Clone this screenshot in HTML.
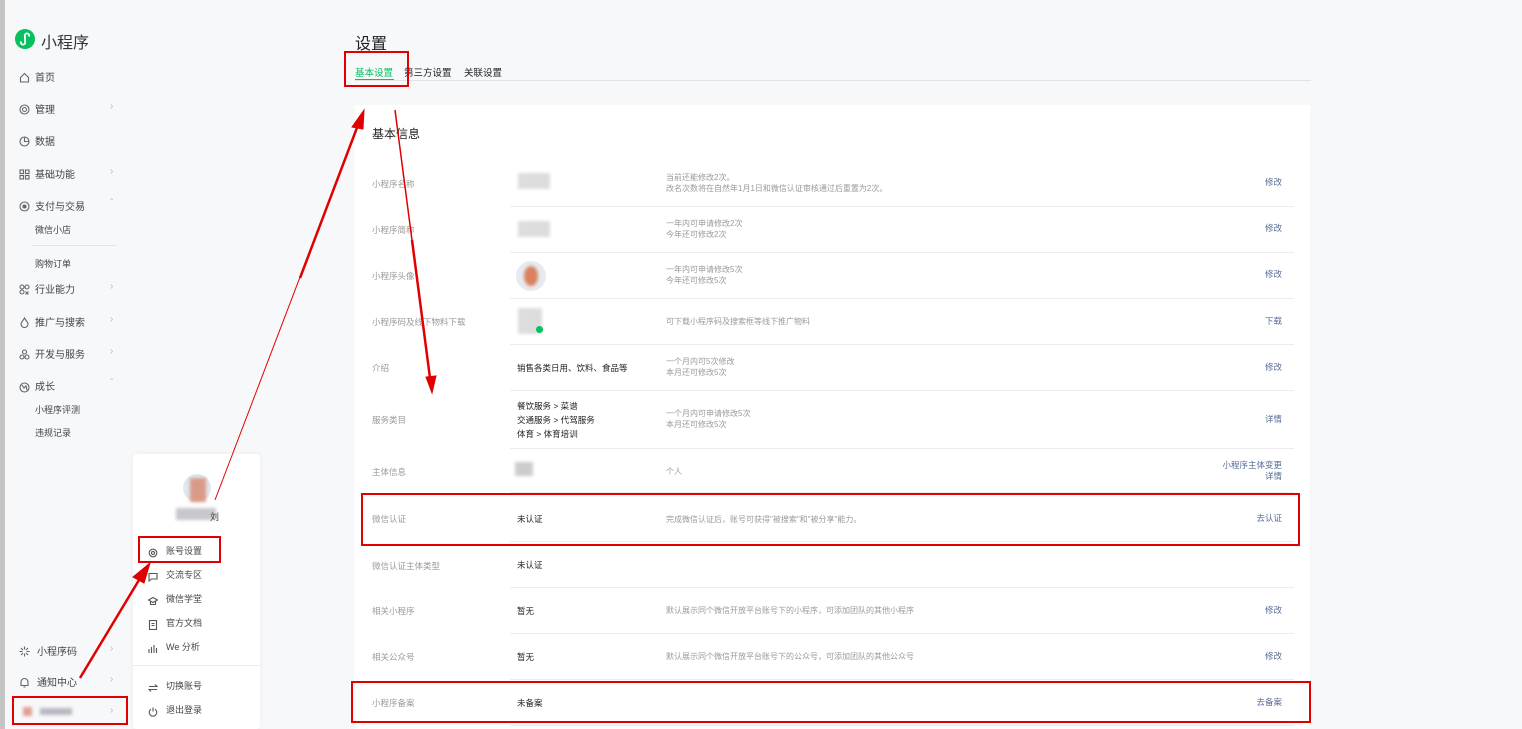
<!DOCTYPE html>
<html><head><meta charset="utf-8"><style>
*{margin:0;padding:0;box-sizing:border-box}
body{width:1522px;height:729px;overflow:hidden;background:#f7f8fa;font-family:"Liberation Sans","Noto Sans CJK SC",sans-serif;position:relative;color:#353535}
.a{position:absolute;white-space:nowrap}
.nav{font-size:10px;color:#444}
.ic{position:absolute;left:19px;width:11px;height:11px}
.ic svg{width:11px;height:11px;fill:none;stroke:#666;stroke-width:1.1}
.chev{position:absolute;left:110px;font-size:10px;color:#bbb}
.sub{font-size:9px;color:#444}
.lab{font-size:8.5px;color:#9a9a9a}
.val{font-size:8.5px;color:#222}
.desc{font-size:8px;color:#9a9a9a;line-height:11px}
.act{font-size:8.5px;color:#576b95;text-align:right;line-height:11px}
.hr{position:absolute;left:510px;width:784px;height:1px;background:#ececec}
.blur{position:absolute;background:#ddd;filter:blur(1.5px)}
.rb{position:absolute;border:2px solid #e00000}
.mi{font-size:9px;color:#444}
.pi{position:absolute;left:148px;width:10px;height:10px}
.pi svg{width:10px;height:10px;fill:none;stroke:#555;stroke-width:1.1}
</style></head><body>
<div class="a" style="left:0;top:0;width:5px;height:729px;background:#c4c4c4"></div>
<svg class="a" style="left:15px;top:29px" width="20" height="20" viewBox="0 0 20 20"><circle cx="10" cy="10" r="10" fill="#07c160"/><path d="M6 12.5a2.2 2.2 0 1 0 4 0V7.5a2.2 2.2 0 1 1 4 0" stroke="#fff" stroke-width="1.8" fill="none"/></svg>
<div class="a" style="left:41px;top:29px;font-size:16px;color:#353535">小程序</div>

<div class="ic" style="top:70px"><svg viewBox="0 0 11 11"><path d="M1.5 5.5L5.5 1.5 9.5 5.5V10H1.5Z"/></svg></div><div class="a nav" style="left:35px;top:69px">首页</div>
<div class="ic" style="top:102px"><svg viewBox="0 0 11 11"><circle cx="5.5" cy="5.5" r="4.5"/><circle cx="5.5" cy="5.5" r="2"/></svg></div><div class="a nav" style="left:35px;top:101px">管理</div><div class="a chev" style="top:101px">›</div>
<div class="ic" style="top:134px"><svg viewBox="0 0 11 11"><circle cx="5.5" cy="5.5" r="4.5"/><path d="M5.5 1V5.5H10"/></svg></div><div class="a nav" style="left:35px;top:133px">数据</div>
<div class="ic" style="top:167px"><svg viewBox="0 0 11 11"><rect x="1" y="1" width="3.5" height="3.5"/><rect x="6.5" y="1" width="3.5" height="3.5"/><rect x="1" y="6.5" width="3.5" height="3.5"/><rect x="6.5" y="6.5" width="3.5" height="3.5"/></svg></div><div class="a nav" style="left:35px;top:166px">基础功能</div><div class="a chev" style="top:166px">›</div>
<div class="ic" style="top:199px"><svg viewBox="0 0 11 11"><circle cx="5.5" cy="5.5" r="4.5"/><circle cx="5.5" cy="5.5" r="1.5" fill="#666"/></svg></div><div class="a nav" style="left:35px;top:198px">支付与交易</div><div class="a chev" style="top:198px">ˆ</div>
<div class="a sub" style="left:35px;top:223px">微信小店</div>
<div class="a" style="left:32px;top:245px;width:84px;height:1px;background:#e3e3e3"></div>
<div class="a sub" style="left:35px;top:257px">购物订单</div>
<div class="ic" style="top:282px"><svg viewBox="0 0 11 11"><circle cx="3" cy="3" r="2"/><circle cx="8" cy="3" r="2"/><circle cx="3" cy="8" r="2"/><path d="M6.5 7.5l3 3M9.5 7.5l-3 3"/></svg></div><div class="a nav" style="left:35px;top:281px">行业能力</div><div class="a chev" style="top:281px">›</div>
<div class="ic" style="top:315px"><svg viewBox="0 0 11 11"><path d="M5.5 1C7 4 9 5 9 7a3.5 3.5 0 0 1-7 0C2 5 4 4 5.5 1Z"/></svg></div><div class="a nav" style="left:35px;top:314px">推广与搜索</div><div class="a chev" style="top:314px">›</div>
<div class="ic" style="top:347px"><svg viewBox="0 0 11 11"><circle cx="5.5" cy="3" r="2"/><circle cx="3" cy="8" r="2"/><circle cx="8" cy="8" r="2"/></svg></div><div class="a nav" style="left:35px;top:346px">开发与服务</div><div class="a chev" style="top:346px">›</div>
<div class="ic" style="top:380px"><svg viewBox="0 0 11 11"><circle cx="5.5" cy="5.5" r="4.5"/><path d="M3 3l2 3 2-2 1 4"/></svg></div><div class="a nav" style="left:35px;top:378px">成长</div><div class="a chev" style="top:378px">ˆ</div>
<div class="a sub" style="left:35px;top:403px">小程序评测</div>
<div class="a sub" style="left:35px;top:426px">违规记录</div>
<div class="ic" style="top:644px"><svg viewBox="0 0 11 11"><path d="M5.5 0.5v3M5.5 7.5v3M0.5 5.5h3M7.5 5.5h3M2 2l2 2M7 7l2 2M9 2L7 4M4 7L2 9"/></svg></div><div class="a nav" style="left:37px;top:643px">小程序码</div><div class="a chev" style="top:643px">›</div>
<div class="ic" style="top:675px"><svg viewBox="0 0 11 11"><path d="M2 8.5V5a3.5 3.5 0 0 1 7 0v3.5H1.5h8M4.5 10h2"/></svg></div><div class="a nav" style="left:37px;top:674px">通知中心</div><div class="a chev" style="top:674px">›</div>
<div class="blur" style="left:23px;top:707px;width:9px;height:9px;background:#e0a090"></div>
<div class="blur" style="left:40px;top:708px;width:32px;height:7px;background:#b8b8c0"></div>
<div class="a chev" style="top:705px">›</div>

<!-- popup -->
<div class="a" style="left:133px;top:454px;width:127px;height:275px;background:#fff;border-radius:4px;box-shadow:0 0 6px rgba(0,0,0,.05)"></div>
<div class="a" style="left:183px;top:474px;width:28px;height:28px;border-radius:50%;background:#dfe8ec"></div>
<div class="blur" style="left:190px;top:478px;width:16px;height:24px;background:#d99a88"></div>
<div class="blur" style="left:176px;top:508px;width:40px;height:12px;background:#c8c8cc"></div>
<div class="a mi" style="left:210px;top:510px">刘</div>
<div class="pi" style="top:545px"><svg viewBox="0 0 10 10"><circle cx="5" cy="5" r="3.8"/><circle cx="5" cy="5" r="1.5"/></svg></div><div class="a mi" style="left:166px;top:544px">账号设置</div>
<div class="pi" style="top:569px"><svg viewBox="0 0 10 10"><path d="M1 1.5h8v5.5H3.5L1 9Z"/></svg></div><div class="a mi" style="left:166px;top:568px">交流专区</div>
<div class="pi" style="top:593px"><svg viewBox="0 0 10 10"><path d="M0.5 4L5 1.5 9.5 4 5 6.5Z M2.5 5.5V8.5H7.5V5.5"/></svg></div><div class="a mi" style="left:166px;top:592px">微信学堂</div>
<div class="pi" style="top:617px"><svg viewBox="0 0 10 10"><rect x="1.5" y="0.5" width="7" height="9"/><path d="M3.5 3.5h3M3.5 5.5h3"/></svg></div><div class="a mi" style="left:166px;top:616px">官方文档</div>
<div class="pi" style="top:641px"><svg viewBox="0 0 10 10"><path d="M1 9V5M3.5 9V3M6 9V1M8.5 9V4"/></svg></div><div class="a mi" style="left:166px;top:640px">We 分析</div>
<div class="a" style="left:133px;top:665px;width:127px;height:1px;background:#ececec"></div>
<div class="pi" style="top:680px"><svg viewBox="0 0 10 10"><path d="M1 3.5h8L7 1.5M9 6.5H1l2 2"/></svg></div><div class="a mi" style="left:166px;top:679px">切换账号</div>
<div class="pi" style="top:704px"><svg viewBox="0 0 10 10"><path d="M3 2.2A3.8 3.8 0 1 0 7 2.2M5 0.5V4.5"/></svg></div><div class="a mi" style="left:166px;top:703px">退出登录</div>

<!-- main -->
<div class="a" style="left:355px;top:30px;font-size:16px;color:#222">设置</div>
<div class="a" style="left:355px;top:65px;font-size:9.5px;color:#07c160">基本设置</div>
<div class="a" style="left:355px;top:79px;width:39px;height:2px;background:#07c160"></div>
<div class="a" style="left:404px;top:65px;font-size:9.5px;color:#222">第三方设置</div>
<div class="a" style="left:464px;top:65px;font-size:9.5px;color:#222">关联设置</div>
<div class="a" style="left:355px;top:80px;width:956px;height:1px;background:#e3e3e3"></div>

<div class="a" style="left:355px;top:105px;width:955px;height:624px;background:#fff"></div>
<div class="a" style="left:372px;top:125px;font-size:12px;color:#222">基本信息</div>

<div class="a lab" style="left:372px;top:178px">小程序名称</div>
<div class="blur" style="left:518px;top:173px;width:32px;height:16px"></div>
<div class="a desc" style="left:666px;top:172px">当前还能修改2次。<br>改名次数将在自然年1月1日和微信认证审核通过后重置为2次。</div>
<div class="a act" style="right:240px;top:177px">修改</div>
<div class="hr" style="top:206px"></div>

<div class="a lab" style="left:372px;top:224px">小程序简称</div>
<div class="blur" style="left:518px;top:221px;width:32px;height:16px"></div>
<div class="a desc" style="left:666px;top:218px">一年内可申请修改2次<br>今年还可修改2次</div>
<div class="a act" style="right:240px;top:223px">修改</div>
<div class="hr" style="top:252px"></div>

<div class="a lab" style="left:372px;top:270px">小程序头像</div>
<div class="a" style="left:516px;top:261px;width:30px;height:30px;border-radius:50%;background:#e6ebef"></div>
<div class="blur" style="left:524px;top:266px;width:14px;height:20px;background:#d98060;border-radius:50%"></div>
<div class="a desc" style="left:666px;top:264px">一年内可申请修改5次<br>今年还可修改5次</div>
<div class="a act" style="right:240px;top:269px">修改</div>
<div class="hr" style="top:298px"></div>

<div class="a lab" style="left:372px;top:316px">小程序码及线下物料下载</div>
<div class="blur" style="left:518px;top:308px;width:24px;height:26px;background:#ddd"></div>
<div class="a" style="left:536px;top:326px;width:7px;height:7px;border-radius:50%;background:#07c160"></div>
<div class="a desc" style="left:666px;top:316px">可下载小程序码及搜索框等线下推广物料</div>
<div class="a act" style="right:240px;top:316px">下载</div>
<div class="hr" style="top:344px"></div>

<div class="a lab" style="left:372px;top:362px">介绍</div>
<div class="a val" style="left:517px;top:362px">销售各类日用、饮料、食品等</div>
<div class="a desc" style="left:666px;top:356px">一个月内可5次修改<br>本月还可修改5次</div>
<div class="a act" style="right:240px;top:362px">修改</div>
<div class="hr" style="top:390px"></div>

<div class="a lab" style="left:372px;top:414px">服务类目</div>
<div class="a val" style="left:517px;top:399px;line-height:14px">餐饮服务 &gt; 菜谱<br>交通服务 &gt; 代驾服务<br>体育 &gt; 体育培训</div>
<div class="a desc" style="left:666px;top:408px">一个月内可申请修改5次<br>本月还可修改5次</div>
<div class="a act" style="right:240px;top:414px">详情</div>
<div class="hr" style="top:448px"></div>

<div class="a lab" style="left:372px;top:466px">主体信息</div>
<div class="blur" style="left:515px;top:462px;width:18px;height:14px;background:#ccc"></div>
<div class="a desc" style="left:666px;top:466px">个人</div>
<div class="a act" style="right:240px;top:460px">小程序主体变更<br>详情</div>
<div class="hr" style="top:492px"></div>

<div class="a lab" style="left:372px;top:513px">微信认证</div>
<div class="a val" style="left:517px;top:513px">未认证</div>
<div class="a desc" style="left:666px;top:514px">完成微信认证后，账号可获得"被搜索"和"被分享"能力。</div>
<div class="a act" style="right:240px;top:513px">去认证</div>
<div class="hr" style="top:541px"></div>

<div class="a lab" style="left:372px;top:560px">微信认证主体类型</div>
<div class="a val" style="left:517px;top:559px">未认证</div>
<div class="hr" style="top:587px"></div>

<div class="a lab" style="left:372px;top:605px">相关小程序</div>
<div class="a val" style="left:517px;top:605px">暂无</div>
<div class="a desc" style="left:666px;top:605px">默认展示同个微信开放平台账号下的小程序，可添加团队的其他小程序</div>
<div class="a act" style="right:240px;top:605px">修改</div>
<div class="hr" style="top:633px"></div>

<div class="a lab" style="left:372px;top:651px">相关公众号</div>
<div class="a val" style="left:517px;top:651px">暂无</div>
<div class="a desc" style="left:666px;top:651px">默认展示同个微信开放平台账号下的公众号，可添加团队的其他公众号</div>
<div class="a act" style="right:240px;top:651px">修改</div>
<div class="hr" style="top:679px"></div>

<div class="a lab" style="left:372px;top:697px">小程序备案</div>
<div class="a val" style="left:517px;top:697px">未备案</div>
<div class="a act" style="right:240px;top:697px">去备案</div>
<div class="hr" style="top:725px"></div>

<div class="rb" style="left:344px;top:51px;width:65px;height:36px"></div>
<div class="rb" style="left:138px;top:536px;width:83px;height:27px"></div>
<div class="rb" style="left:12px;top:696px;width:116px;height:29px"></div>
<div class="rb" style="left:361px;top:493px;width:939px;height:53px"></div>
<div class="rb" style="left:351px;top:681px;width:960px;height:42px"></div>

<svg class="a" style="left:0;top:0" width="1522" height="729">
<g stroke="#e00000" fill="#e00000">
<line x1="80" y1="678" x2="142" y2="575" stroke-width="2.5"/>
<polygon points="150,563 133,577 144,583"/>
<line x1="215" y1="500" x2="358" y2="125" stroke-width="1"/>
<line x1="300" y1="278" x2="358" y2="125" stroke-width="2.5"/>
<polygon points="364,110 352,127 363,129"/>
<line x1="395" y1="110" x2="430" y2="378" stroke-width="1.5"/>
<line x1="412" y1="240" x2="430" y2="378" stroke-width="2.5"/>
<polygon points="432,393 426,377 436,376"/>
</g>
</svg>
</body></html>
